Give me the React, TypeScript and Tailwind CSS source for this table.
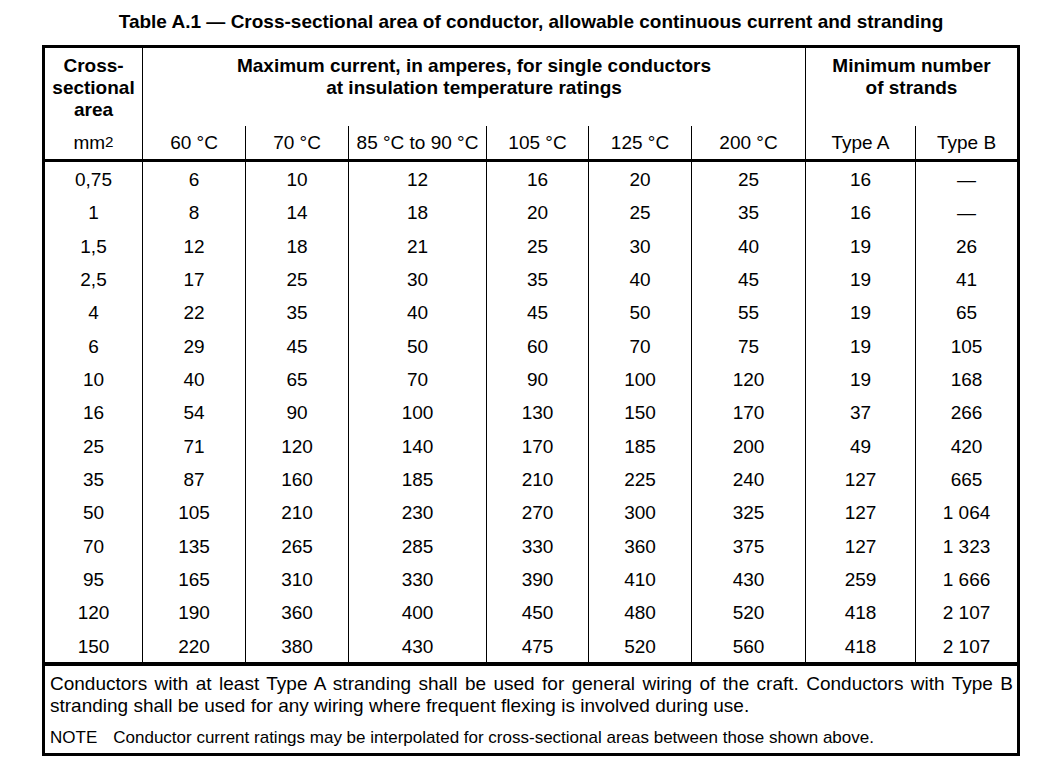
import React from 'react';

const rows: string[][] = [
  ['0,75', '6', '10', '12', '16', '20', '25', '16', '—'],
  ['1', '8', '14', '18', '20', '25', '35', '16', '—'],
  ['1,5', '12', '18', '21', '25', '30', '40', '19', '26'],
  ['2,5', '17', '25', '30', '35', '40', '45', '19', '41'],
  ['4', '22', '35', '40', '45', '50', '55', '19', '65'],
  ['6', '29', '45', '50', '60', '70', '75', '19', '105'],
  ['10', '40', '65', '70', '90', '100', '120', '19', '168'],
  ['16', '54', '90', '100', '130', '150', '170', '37', '266'],
  ['25', '71', '120', '140', '170', '185', '200', '49', '420'],
  ['35', '87', '160', '185', '210', '225', '240', '127', '665'],
  ['50', '105', '210', '230', '270', '300', '325', '127', '1 064'],
  ['70', '135', '265', '285', '330', '360', '375', '127', '1 323'],
  ['95', '165', '310', '330', '390', '410', '430', '259', '1 666'],
  ['120', '190', '360', '400', '450', '480', '520', '418', '2 107'],
  ['150', '220', '380', '430', '475', '520', '560', '418', '2 107'],
];

const subHeads = ['60 °C', '70 °C', '85 °C to 90 °C', '105 °C', '125 °C', '200 °C', 'Type A', 'Type B'];

const cols = 'grid grid-cols-[97px_103px_103px_138px_102px_103px_114px_110px_102px]';

export default function App() {
  return (
    <div className="w-[1061px] h-[774px] bg-white text-black font-['Liberation_Sans',Arial,sans-serif]">
      {/* Title */}
      <div className="ml-[42px] w-[978px] h-[45px] flex items-center justify-center text-[19px] font-bold">
        Table A.1 — Cross-sectional area of conductor, allowable continuous current and stranding
      </div>

      {/* Table */}
      <div className="ml-[42px] w-[978px] border-[3px] border-black text-[19px]">
        {/* Header */}
        <div className={`${cols} grid-rows-[78px_33px] border-b-[3px] border-black`}>
          <div className="pt-[7px] text-center font-bold leading-[22px]">
            Cross-
            <br />
            sectional
            <br />
            area
          </div>
          <div className="col-span-6 border-l border-black pt-[7px] text-center font-bold leading-[22px]">
            Maximum current, in amperes, for single conductors
            <br />
            at insulation temperature ratings
          </div>
          <div className="col-span-2 border-l border-black pt-[7px] text-center font-bold leading-[22px]">
            Minimum number
            <br />
            of strands
          </div>
          <div className="flex items-center justify-center pt-[2px]">
            mm<sup className="text-[0.8em] relative -top-[0.1em]">2</sup>
          </div>
          {subHeads.map(h => (
            <div key={h} className="flex items-center justify-center border-l border-black whitespace-nowrap pt-[2px]">
              {h}
            </div>
          ))}
        </div>

        {/* Body */}
        <div className={`${cols} grid-rows-[repeat(15,1fr)] h-[500px]`}>
          {rows.map((r, i) =>
            r.map((v, j) => (
              <div
                key={`${i}-${j}`}
                className={`flex items-center justify-center pt-[3px] ${j > 0 ? 'border-l border-black' : ''}`}
              >
                {v}
              </div>
            ))
          )}
        </div>
      </div>

      {/* Notes */}
      <div className="ml-[42px] w-[978px] h-[91px] border-[3px] border-t border-black pl-[5px] pr-[4px] pt-[7px]">
        <p className="text-[19px] leading-[22px] text-justify">
          Conductors with at least Type A stranding shall be used for general wiring of the craft. Conductors with Type B
          stranding shall be used for any wiring where frequent flexing is involved during use.
        </p>
        <p className="mt-[12px] text-[17px] leading-[18px]">
          NOTE<span className="ml-[16px]">Conductor current ratings may be interpolated for cross-sectional areas between those shown above.</span>
        </p>
      </div>
    </div>
  );
}
